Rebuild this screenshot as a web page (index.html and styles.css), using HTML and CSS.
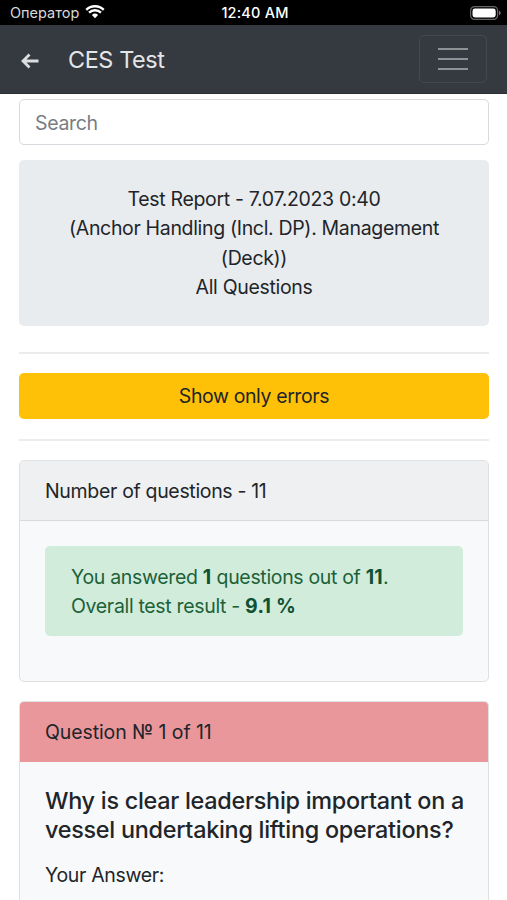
FILE: index.html
```html
<!DOCTYPE html>
<html lang="en">
<head>
<meta charset="utf-8">
<title>CES Test</title>
<link rel="stylesheet" href="styles.css">
</head>
<body>
<div class="status">
  <div class="status-left"><span>Оператор</span>
    <svg class="wifi" width="20" height="15" viewBox="0 0 20 15"><path d="M10 14.2 6.900 10.900a4.500 4.500 0 0 1 6.200 0z" fill="#fff"/><path d="M.4 4.900a13.700 13.700 0 0 1 19.200 0l-1.700 1.800a11.200 11.200 0 0 0-15.800 0z" fill="#fff"/><path d="M3.200 7.800a9.700 9.700 0 0 1 13.600 0l-1.700 1.800a7.200 7.200 0 0 0-10.200 0z" fill="#fff"/></svg>
  </div>
  <div class="status-time">12:40 AM</div>
  <div class="status-right">
    <svg width="31" height="14" viewBox="0 0 31 14"><rect x=".6" y=".6" width="27" height="12.800" rx="4" fill="none" stroke="#666" stroke-width="1.200"/><rect x="2.500" y="2.500" width="23.200" height="9" rx="2.400" fill="#fff"/><path d="M29 4.800c1 .3 1.600 1.100 1.600 2.200S30 8.900 29 9.200z" fill="#777"/></svg>
  </div>
</div>
<nav class="nav">
  <svg class="back" width="20" height="18" viewBox="0 0 20 18"><path d="M18.500 9H3M9.500 2.500 3 9l6.500 6.500" fill="none" stroke="#dcdddf" stroke-width="2.800"/></svg>
  <span class="brand">CES Test</span>
  <button class="toggler" type="button" aria-label="Menu">
    <svg width="30" height="24" viewBox="0 0 30 24"><path d="M0 2h30M0 12h30M0 22h30" stroke="#8f9295" stroke-width="2.200"/></svg>
  </button>
</nav>
<main class="page">
  <input class="search" type="text" placeholder="Search">
  <section class="jumbo">Test Report - 7.07.2023 0:40<br>(Anchor Handling (Incl. DP). Management (Deck))<br>All Questions</section>
  <hr class="rule rule-a">
  <button class="warn" type="button">Show only errors</button>
  <hr class="rule rule-b">
  <section class="card">
    <header class="card-head">Number of questions - 11</header>
    <div class="card-body card-body-sum">
      <div class="alert">You answered <b>1</b> questions out of <b>11</b>.<br>Overall test result - <b>9.1 %</b></div>
    </div>
  </section>
  <section class="card card-q">
    <header class="card-head head-danger">Question № 1 of 11</header>
    <div class="card-body card-body-q">
      <h2 class="q-title">Why is clear leadership important on a vessel undertaking lifting operations?</h2>
      <p class="q-label">Your Answer:</p>
    </div>
  </section>
</main>
</body>
</html>
```
FILE: styles.css
```css
* { box-sizing: border-box; }
html, body { margin: 0; height: 900px; overflow: hidden; background: #fff; }
body { font-family: Inter, "Liberation Sans", sans-serif; font-size: 19.5px; line-height: 29.3px; letter-spacing: -.33px; color: #212529; }

.status { height: 25px; background: #000; color: #fff; display: flex; align-items: center; padding: 0 6px 0 10px; font-size: 14.5px; line-height: 25px; letter-spacing: 0; }
.status-left { display: flex; align-items: center; gap: 6px; color: #d8d8d8; flex: 1; }
.wifi { margin-top: -3px; }
.status-time { flex: 1; text-align: center; font-weight: 500; letter-spacing: .2px; margin-left: -1px; }
.status-right { flex: 1; display: flex; justify-content: flex-end; }

.nav { height: 69px; background: #343a40; display: flex; align-items: center; padding: 2px 20px 0 20px; border-bottom: 1px solid #2b2f33; }
.back { flex: none; margin-top: 1px; }
.brand { margin-left: 28px; flex: 1; font-size: 23.4px; letter-spacing: -.4px; color: #e4e5e7; }
.toggler { width: 68px; height: 48px; margin-top: -3px; background: none; border: 1px solid #44494f; border-radius: 5px; padding: 0; display: flex; align-items: center; justify-content: center; }

.page { padding: 5px 18px 0 19px; }
.search { display: block; width: 100%; height: 46px; border: 1px solid #d6dadf; border-radius: 5px; padding: 1px 15px 0; font: inherit; letter-spacing: -.33px; background: #fff; }
.search::placeholder { color: #777d83; opacity: 1; }

.jumbo { margin-top: 15px; background: #e9ecef; border-radius: 5px; padding: 25px 20px 23px; height: 166px; text-align: center; }

.rule { border: 0; height: 2px; background: #ebecee; margin: 0; }
.rule-a { margin-top: 26px; }
.rule-b { margin-top: 20px; }

.warn { display: block; width: 100%; height: 46px; margin-top: 19px; border: 0; border-radius: 5px; padding: 2px 0 0; background: #ffc107; color: #212529; font: inherit; letter-spacing: -.4px; }

.card { margin-top: 19px; border: 1px solid #dfe0e2; border-radius: 5px; background: #f8f9fa; overflow: hidden; height: 222px; }
.card-q { margin-top: 19px; height: 199px; border-bottom: 0; border-radius: 5px 5px 0 0; }
.card-head { height: 60px; padding: 16px 25px 0; background: #eff0f2; border-bottom: 1px solid #d9dadc; }
.head-danger { background: #ea979c; border-bottom: 0; height: 60px; letter-spacing: -.1px; }
.card-body { padding: 25px 25px 0; }
.card-body-q { padding: 24px 15px 0 25px; }
.alert { background: #d2ecdc; color: #1c6138; border-radius: 5px; height: 90px; padding: 17px 26px 0; }
.alert b { font-weight: 700; letter-spacing: .25px; color: #0f5132; }
.q-title { margin: 0; font-size: 23.4px; line-height: 29.3px; font-weight: 500; letter-spacing: -.27px; color: #212529; }
.q-label { margin: 16px 0 0; }
```
